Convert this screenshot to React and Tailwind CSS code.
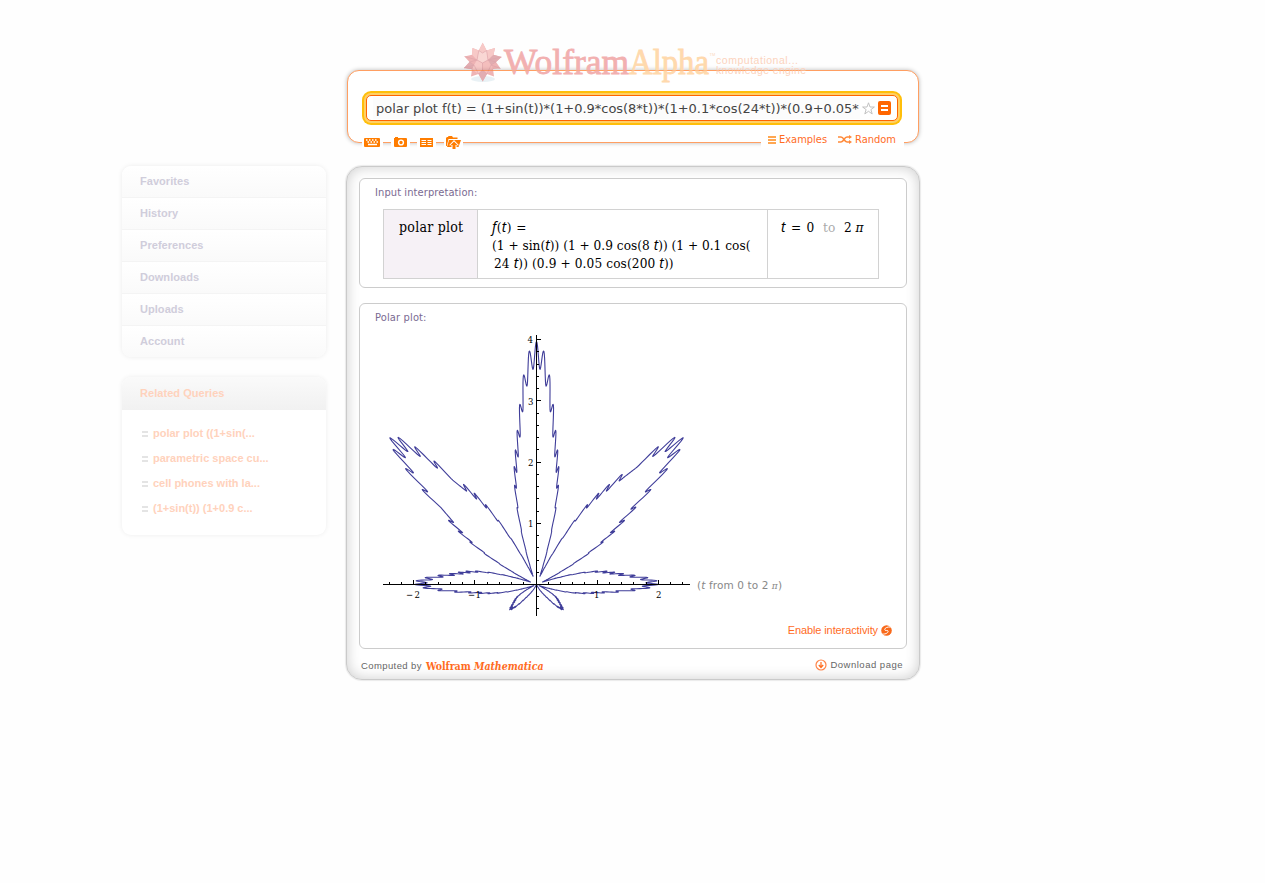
import React from 'react';

const UNIT = 61.2;
const STEP = Math.PI / 100;
const FLAT = [28 * STEP, 71 * STEP, 79 * STEP];

function radius(t) {
  const flat = FLAT.some((p) => Math.abs(t - p) < STEP / 2);
  return (
    (1 + Math.sin(t)) *
    (1 + 0.9 * Math.cos(8 * t)) *
    (1 + 0.1 * Math.cos(24 * t)) *
    (0.9 + 0.05 * (flat ? -1 : Math.cos(200 * t)))
  );
}

function curvePath() {
  const steps = 3000;
  let d = '';
  for (let i = 0; i <= steps; i++) {
    const t = (i / steps) * Math.PI * 2;
    const r = radius(t) * UNIT;
    d += `${i ? 'L' : 'M'}${(153.5 + r * Math.cos(t)).toFixed(2)} ${(249.5 - r * Math.sin(t)).toFixed(2)}`;
  }
  return d;
}

const curve = curvePath();

function Plot() {
  const xt = [];
  for (let i = -12; i <= 12; i++) if (i) xt.push(i);
  const yt = [];
  for (let i = -2; i <= 20; i++) if (i) yt.push(i);
  return (
    <svg width="410" height="284" viewBox="0 0 410 284" className="block">
      <path d={curve} fill="none" stroke="#3f3d99" strokeWidth="1.1" strokeLinejoin="round" />
      <g stroke="#000" strokeWidth="1" shapeRendering="crispEdges">
        <path d="M0 249.5H307M153.5 0V281" />
        {xt.map((i) => (
          <path key={i} d={`M${Math.floor(153 + (i * UNIT) / 5) + 0.5} 250v${i % 5 ? -3 : -5}`} />
        ))}
        {yt.map((i) => (
          <path key={i} d={`M153 ${Math.round(249 - (i * UNIT) / 5) + 0.5}h${i % 5 ? 3 : 5}`} />
        ))}
      </g>
      <g fontFamily="'DejaVu Serif Condensed', 'DejaVu Serif', serif" fontSize="9.5" fill="#000">
        <text x="23" y="263">−</text>
        <text x="31.500" y="263">2</text>
        <text x="85" y="263">−</text>
        <text x="92.500" y="263">1</text>
        <text x="211" y="263">1</text>
        <text x="273" y="263">2</text>
        <text x="145" y="192">1</text>
        <text x="145" y="131">2</text>
        <text x="145" y="70">3</text>
        <text x="144.500" y="8">4</text>
      </g>
      <text x="314" y="254" textLength="85" fontFamily="'DejaVu Sans', sans-serif" fontSize="10.5" fill="#888">
        (<tspan fontStyle="italic">t</tspan> from 0 to 2 <tspan fontSize="9" fontStyle="italic" fontFamily="'DejaVu Serif'">π</tspan>)
      </text>
    </svg>
  );
}

function Logo() {
  return (
    <svg width="350" height="46" viewBox="0 0 350 46" className="absolute left-[461px] top-[40px]">
      <g opacity=".45">
        <ellipse cx="22" cy="39" rx="12" ry="3" fill="#cfe2ea" />
        <path d="M21.700 2.700L25.600 10.500L34 8L32.500 14.700L40.500 17L35 22L39.500 28.500L32 29L33 36.500L26 34L21.700 41.500L17.500 34L10 36.500L11 29.300L3 28L8.500 22L3.500 16.500L11 14.700L11.500 8L17.800 10.500Z" fill="#dc5a5c" />
        <path d="M21.700 2.700L25.600 10.500L21.500 15L17.800 10.500ZM34 8L32.500 14.700L27 20L25.600 10.500ZM11.500 8L17.800 10.500L16 20L11 14.700Z" fill="#f08a86" />
        <path d="M17.800 10.500L21.500 13L25.600 10.500L27 20L21.500 23L16 20Z" fill="#f5a8a2" />
        <path d="M16 20L21.500 23V30L17.500 34L11 29.300L13 25Z" fill="#f08a86" />
        <path d="M27 20L21.500 23V30L26 34L32 29L30 25Z" fill="#e8726f" />
        <path d="M3 28L8.500 22L13 25L11 29.300ZM40.500 17L35 22L30 25L27 20L32.500 14.700ZM21.500 30L26 34L21.700 41.500L17.500 34Z" fill="#c04c56" />
        <path d="M17.800 10.500L21.500 13L25.600 10.500L27 20L21.500 23L16 20ZM16 20L3.500 16.500M16 20L8.500 22L13 25L17.500 34L21.500 30L26 34L30 25L35 22L27 20L40.500 17M21.500 23V30M13 25L3 28M30 25L39.500 28.500" fill="none" stroke="#b63845" strokeWidth=".6" />
      </g>
      <g fontFamily="'Liberation Serif', serif" fontSize="36">
        <text x="43" y="34" textLength="125" lengthAdjust="spacingAndGlyphs" fill="#f2b0b0" stroke="#f2b0b0" strokeWidth=".8">Wolfram</text>
        <text x="168" y="34" textLength="80" lengthAdjust="spacingAndGlyphs" fill="#ffd9ad" stroke="#ffd9ad" strokeWidth=".8">Alpha</text>
      </g>
      <text x="248.500" y="16" fontFamily="'Liberation Sans', sans-serif" fontSize="4" fill="#fbd9c0">TM</text>
      <g fontFamily="'Liberation Sans', sans-serif" fontSize="10.500" fill="#fcd3bd">
        <text x="255" y="24" textLength="82">computational...</text>
        <text x="255" y="34" textLength="90">knowledge engine</text>
      </g>
      <path d="M0 30.500H350" stroke="#ff9f62" strokeOpacity=".5" />
    </svg>
  );
}

function InputIcons() {
  return (
    <div className="absolute left-[14px] top-[63px] flex">
      <span className="mr-[8px] bg-white px-[2px]">
        <svg width="17" height="16" viewBox="0 0 17 16">
          <rect x="0" y="4" width="16" height="9" rx="1" fill="#ff7d00" />
          <path d="M2 6h1.500M5 6h1.500M8 6h1.500M11 6h1.500M3.500 8h1.500M6.500 8h1.500M9.500 8h1.500M12.500 8h1.500M4 10.500h9" stroke="#fff" strokeWidth="1.300" />
        </svg>
      </span>
      <span className="mr-[7px] bg-white px-[2px]">
        <svg width="15" height="16" viewBox="0 0 15 16">
          <path d="M1 4h1V3h3v1h8q1 0 1 1v7q0 1-1 1H2q-1 0-1-1V5Z" fill="#ff7d00" />
          <circle cx="8" cy="8.500" r="2.400" fill="none" stroke="#fff" strokeWidth="1.400" />
        </svg>
      </span>
      <span className="mr-[8px] bg-white px-[2px]">
        <svg width="15" height="16" viewBox="0 0 15 16">
          <rect x="1" y="4" width="13" height="9" fill="#ff7d00" />
          <path d="M2.500 6.500h4.500M2.500 8.500h4.500M2.500 10.500h4.500M8.500 6.500h4M8.500 8.500h4M8.500 10.500h4" stroke="#fff" strokeWidth="1.100" />
        </svg>
      </span>
      <span className="bg-white px-[1px]">
        <svg width="17" height="16" viewBox="0 0 17 16">
          <path d="M1 12V4l1-1h1l.500-1H7l1 1.500h4.500V5H3.500L1.800 12Z" fill="#ff7d00" />
          <path d="M4 6H16l-2.500 7H2Z" fill="#ff7d00" />
          <path d="M9 6l5 5.200h-2.500V15.500h-5V11.200H4Z" fill="#fff" />
          <path d="M9 7.500l3.500 3.500h-2v4h-3v-4h-2Z" fill="#ff7d00" />
        </svg>
      </span>
    </div>
  );
}

function Header() {
  return (
    <header className="pt-[70px] pl-[347px]">
      <div className="relative h-[73px] w-[572px] rounded-[12px] border border-[#ff9f62] bg-white px-[14px] pt-[20px] shadow-[0_0_4px_rgba(0,0,0,0.28)]">
        <div className="h-[34px] w-[540px] rounded-[9px] bg-[#ffbf0a] p-[2px]">
          <div className="h-[30px] rounded-[7px] bg-[#ffcf66] p-[2px]">
            <div className="flex h-[26px] items-center rounded-[5px] border border-[#ff6600] bg-white pl-[6px]">
              <div className="h-[22px] w-[487px] overflow-hidden bg-[#fcfcfc] pl-[3px] font-['DejaVu_Sans',sans-serif] text-[13px] leading-[24px] tracking-[-0.03px] whitespace-nowrap text-[#444]">
                polar plot f(t) = (1+sin(t))*(1+0.9*cos(8*t))*(1+0.1*cos(24*t))*(0.9+0.05*
              </div>
              <svg width="13" height="13" viewBox="0 0 13 13" className="ml-[2px]">
                <path d="M6.500.800L8 5h4.400L8.900 7.600l1.300 4.300L6.500 9.300l-3.700 2.600 1.300-4.300L.600 5H5Z" fill="#fff" stroke="#bbb" strokeWidth=".9" />
              </svg>
              <svg width="13" height="14" viewBox="0 0 13 14" className="ml-[3px]">
                <rect width="13" height="14" rx="2" fill="#ff6600" />
                <path d="M3 5h7M3 9h7" stroke="#fff" strokeWidth="2" />
              </svg>
            </div>
          </div>
        </div>
        <InputIcons />
        <div className="absolute top-[61px] right-[14px] flex h-[16px] items-center bg-white pl-[7px] pr-[8px] font-['DejaVu_Sans_Condensed','DejaVu_Sans',sans-serif] text-[11px] text-[#ff6c1f]">
          <svg width="8" height="8" viewBox="0 0 8 8" className="mr-[3px]">
            <path d="M0 1h8M0 4h8M0 7h8" stroke="#ff8a1a" strokeWidth="1.700" />
          </svg>
          <span className="w-[48px] whitespace-nowrap">Examples</span>
          <svg width="14" height="9" viewBox="0 0 14 9" className="mr-[3px] ml-[11px] mb-[2px]">
            <path d="M0 2h3c3 0 3 5 6 5H12M0 7h3c3 0 3-5 6-5H12" fill="none" stroke="#ff8a3a" strokeWidth="1.500" />
            <path d="M11 0l3 2-3 2ZM11 5l3 2-3 2Z" fill="#ff8a3a" />
          </svg>
          <span className="w-[41px] whitespace-nowrap">Random</span>
        </div>
      </div>
      <Logo />
    </header>
  );
}

const menu = ['Favorites', 'History', 'Preferences', 'Downloads', 'Uploads', 'Account'];
const related = ['polar plot ((1+sin(...', 'parametric space cu...', 'cell phones with la...', '(1+sin(t)) (1+0.9 c...'];

function Sidebar() {
  return (
    <aside className="w-[204px] font-['Liberation_Sans',Arial,sans-serif] text-[11px] font-bold">
      <nav className="overflow-hidden rounded-[9px] shadow-[0_0_5px_rgba(0,0,0,0.08)]">
        {menu.map((m) => (
          <div key={m} className="h-[32px] border-b border-[#f4f4f4] bg-linear-to-b from-white to-[#fafafa] pl-[18px] leading-[31px] tracking-[0.05px] text-[#d0cddb] last:h-[31px] last:border-b-0">
            {m}
          </div>
        ))}
      </nav>
      <section className="mt-[20px] h-[158px] overflow-hidden rounded-[9px] bg-white shadow-[0_0_5px_rgba(0,0,0,0.07)]">
        <h2 className="h-[33px] bg-linear-to-b from-[#fafafa] to-[#f1f1f1] pl-[18px] leading-[33px] tracking-[0.05px] text-[#ffd2bc]">Related Queries</h2>
        <ul className="pt-[11px]">
          {related.map((r) => (
            <li key={r} className="flex h-[25px] items-center pl-[20px] text-[#ffd2bc]">
              <svg width="6" height="6" viewBox="0 0 6 6" className="mr-[5px]">
                <path d="M0 1h6M0 5h6" stroke="#e4e4e4" strokeWidth="2" />
              </svg>
              {r}
            </li>
          ))}
        </ul>
      </section>
    </aside>
  );
}

function V({ children }) {
  return <i className="font-['Noto_Sans','DejaVu_Sans',sans-serif] leading-[1px]">{children}</i>;
}

function Results() {
  return (
    <main className="ml-[20px] h-[514px] w-[574px] rounded-[16px] border border-[#cacaca] bg-white px-[12px] pt-[11px] shadow-[inset_0_0_14px_rgba(0,0,0,0.2),0_0_1px_1px_rgba(0,0,0,0.08)]">
      <section className="h-[110px] rounded-[6px] border border-[#ccc] bg-white pl-[15px]">
        <h2 className="h-[30px] pt-[6px] font-['DejaVu_Sans_Condensed','DejaVu_Sans',sans-serif] text-[11px] leading-[15px] tracking-[0.1px] text-[#7a6a92]">Input interpretation:</h2>
        <div className="ml-[8px] flex h-[70px] w-[496px] border border-[#d2d2d2] font-['DejaVu_Serif_Condensed','DejaVu_Serif',serif] text-[13.500px] leading-[18px] text-black">
          <div className="w-[94px] border-r border-[#d2d2d2] bg-[#f6f1f6] pt-[8px] pl-[15px] text-[14px] tracking-[0.25px] whitespace-nowrap">polar plot</div>
          <div className="w-[290px] border-r border-[#d2d2d2] pt-[8px] pl-[14px] tracking-[0.02px] whitespace-nowrap">
            <div className="h-[18px] tracking-[0.4px]"><V>f</V>(<V>t</V>) =</div>
            <div className="h-[18px]">(1 + sin(<V>t</V>)) (1 + 0.9 cos(8 <V>t</V>)) (1 + 0.1 cos(</div>
            <div className="h-[18px] pl-[2px] tracking-[0.12px]">24 <V>t</V>)) (0.9 + 0.05 cos(200 <V>t</V>))</div>
          </div>
          <div className="flex pt-[8px] pl-[13px] whitespace-nowrap">
            <span className="w-[42px] tracking-[0.8px]"><V>t</V> = 0</span>
            <span className="w-[21px] text-[#aaa]">to</span>
            <span>2 <i>π</i></span>
          </div>
        </div>
      </section>
      <section className="mt-[15px] h-[346px] rounded-[6px] border border-[#ccc] bg-white pl-[15px]">
        <h2 className="h-[31px] pt-[6px] font-['DejaVu_Sans_Condensed','DejaVu_Sans',sans-serif] text-[11px] leading-[15px] tracking-[0.15px] text-[#7a6a92]">Polar plot:</h2>
        <div className="ml-[8px] h-[284px]"><Plot /></div>
        <div className="flex items-center justify-end pr-[14px] font-['Liberation_Sans',Arial,sans-serif] text-[11px] leading-[22px] tracking-[-0.1px] text-[#ff6c1f]">
          Enable interactivity
          <svg width="11" height="11" viewBox="0 0 11 11" className="ml-[3px]">
            <circle cx="5.500" cy="5.500" r="5.300" fill="#f96a1b" />
            <path d="M9.800 2C6 1.500 2.800 3.500 4 5.200c.8.900 2.300-.300 3 .700.700 1.600-2 3.400-5.800 3.200" fill="none" stroke="#fff" strokeWidth="1" />
            <path d="M0 3L3.500 0H0ZM11 8L7.500 11H11Z" fill="#fff" />
          </svg>
        </div>
      </section>
      <footer className="flex h-[31px] items-center justify-between pr-[4px] pl-[2px] font-['Liberation_Sans',Arial,sans-serif] text-[9.500px] text-[#666]">
        <div className="flex items-center pt-[2px] whitespace-nowrap">
          <span className="w-[65px] pt-[1px] tracking-[0.4px]">Computed by</span>
          <span className="font-['DejaVu_Serif_Condensed','DejaVu_Serif',serif] text-[10.500px] leading-[12px] font-bold tracking-[-0.02px] text-[#ff6c1f]">Wolfram <i>Mathematica</i></span>
        </div>
        <div className="flex items-center tracking-[0.5px]">
          <svg width="12" height="12" viewBox="0 0 12 12" className="mr-[3px] -ml-[1px]">
            <circle cx="6" cy="6" r="5" fill="#fff" stroke="#ff8448" strokeWidth="1.200" />
            <path d="M6 3v5M3.800 6L6 8.500 8.200 6" fill="none" stroke="#ff6c1f" strokeWidth="1.200" />
          </svg>
          <span className="pt-[1px]">Download page</span>
        </div>
      </footer>
    </main>
  );
}

export default function App() {
  return (
    <div className="relative h-[883px] w-[1265px] overflow-hidden bg-[#fefefe]">
      <Header />
      <div className="flex items-start pt-[23px] pl-[122px]">
        <Sidebar />
        <Results />
      </div>
    </div>
  );
}
